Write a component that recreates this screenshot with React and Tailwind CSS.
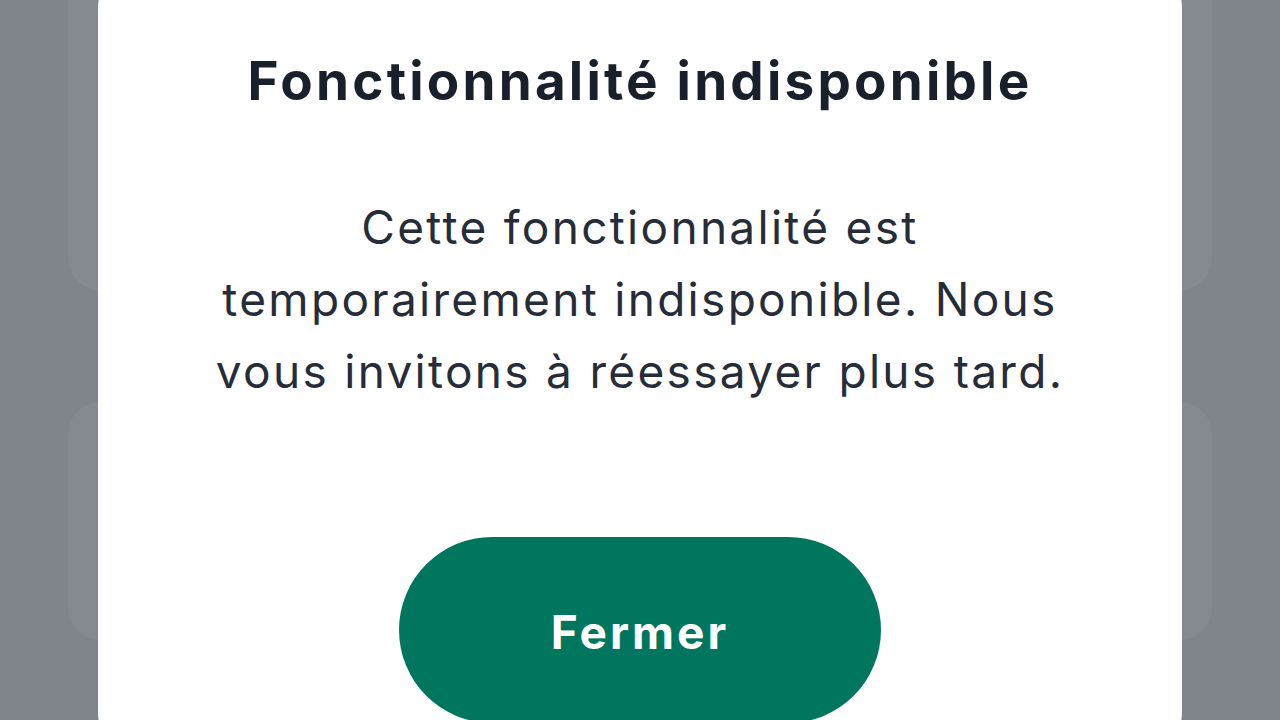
import React from "react";

const sideCards = [
  { id: 1, className: "h-[330px] -mt-[40px]" },
  { id: 2, className: "h-[238px] mt-[112px]" },
];

export default function App() {
  return (
    <div className="relative w-[1280px] h-[720px] overflow-hidden bg-[#7f858b] font-['Inter',sans-serif]">
      {/* page behind the overlay */}
      <div className="flex flex-col px-[68px]">
        {sideCards.map((card) => (
          <div
            key={card.id}
            className={`w-full rounded-[32px] bg-[#848a8f] ${card.className}`}
          />
        ))}
      </div>

      {/* dialog */}
      <div className="absolute inset-0 flex justify-center">
        <div className="w-[1084px] h-[800px] -mt-[40px] rounded-[48px] bg-white flex flex-col items-center">
          <h2 className="mt-[92px] text-[53px] leading-[58px] font-bold text-[#18202c] tracking-[3.2px]">
            Fonctionnalité indisponible
          </h2>
          <p className="mt-[81px] text-center text-[46px] leading-[72px] text-[#262d38] tracking-[2.3px]">
            Cette fonctionnalité est
            <br />
            temporairement indisponible. Nous
            <br />
            vous invitons à réessayer plus tard.
          </p>
          <button className="mt-[130px] w-[482px] h-[186px] rounded-full bg-[#00765f] text-white text-[46px] font-bold tracking-[3px] pt-[4px]">
            Fermer
          </button>
        </div>
      </div>
    </div>
  );
}
